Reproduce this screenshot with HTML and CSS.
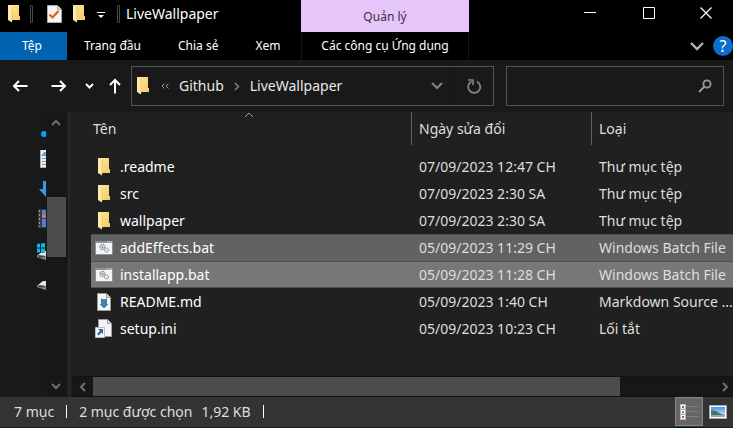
FILE: index.html
```html
<!DOCTYPE html>
<html lang="vi">
<head>
<meta charset="utf-8">
<title>LiveWallpaper</title>
<link rel="stylesheet" href="styles.css">
</head>
<body>
<svg class="defs" aria-hidden="true">
  <defs>
    <linearGradient id="fold" x1="0" y1="0" x2="1" y2="1"><stop offset="0" stop-color="#ffe79c"/><stop offset="1" stop-color="#f3cc63"/></linearGradient>
    <linearGradient id="sky" x1="0" y1="0" x2="0" y2="1"><stop offset="0" stop-color="#4a90f5"/><stop offset="1" stop-color="#e4f2fc"/></linearGradient>
    <symbol id="folder" viewBox="0 0 12 18">
      <path d="M0 0h11v11h1v4H4z" fill="url(#fold)"/>
      <path d="M0 0l4 2v15.500L0 15z" fill="#ffe9a8"/>
      <path d="M4 2v14" stroke="#e5bd5b" stroke-width=".6"/>
    </symbol>
    <symbol id="batch" viewBox="0 0 18 14">
      <path d="M.5.500h17v13H.5z" fill="#f5f5f5" stroke="#8c9196"/>
      <path d="M0 0h18v2H0z" fill="#8c9196"/><path d="M12 1h1m1 0h1m1 0h1" stroke="#eee"/>
      <circle cx="7.500" cy="6" r="2.500" fill="none" stroke="#8b8f94" stroke-width="1.500" stroke-dasharray="1.200 .5"/>
      <circle cx="7.500" cy="6" r="1" fill="#777"/>
      <circle cx="11.500" cy="9" r="2" fill="#e3edf4" stroke="#8ba5b8" stroke-width="1.300" stroke-dasharray="1 .5"/>
    </symbol>
    <symbol id="markdown" viewBox="0 0 14 18">
      <path d="M.5.500h9l4 4v13H.5z" fill="#f7f7f7" stroke="#9a9a9a"/><path d="M9.500.500v4h4" fill="#ddd" stroke="#9a9a9a"/>
      <path d="M4 5l1 1h4l1-1v6h1.500L7 15.500 2.500 11H4z" fill="#3f87a6"/>
    </symbol>
    <symbol id="shortcut" viewBox="0 0 18 19">
      <path d="M3.500.500h9l4 4v13h-13z" fill="#f4f4f4" stroke="#a0a0a0"/><path d="M12.500.500v4h4" fill="#ddd" stroke="#a0a0a0"/>
      <path d="M.5 8.500h9v10h-9z" fill="#f5f8fb" stroke="#b5bcc5"/>
      <path d="M3 10h5v5l-1.500-1.500-3 3-1.500-1.500 3-3z" fill="#2862a8"/>
    </symbol>
    <symbol id="drive" viewBox="0 0 9 9"><path d="M1 4l5-4h3v5z" fill="#e6e6e6"/><path d="M0 4l9 1v4L0 6z" fill="#969a9d"/><path d="M1 4.500l7 1v2L1 5.500z" fill="#303234"/><path d="M5 6l3 .5v1L5 7z" fill="#36b758"/></symbol>
  </defs>
</svg>
<div class="window">
  <header class="top">
    <div class="title">
      <svg class="folder"><use href="#folder"/></svg>
      <i class="bar"></i>
      <button class="qat check" aria-label="Thuộc tính"><svg width="15" height="18" viewBox="0 0 15 18"><path d="M.5.500h10l4 4v13H.5z" fill="#f5f5f8" stroke="#aaa"/><path d="M10.500.500v4h4" fill="#ddd" stroke="#aaa"/><path d="M2.500 9.500l3 3 6-6.500" fill="none" stroke="#f05a18" stroke-width="2.200"/></svg></button>
      <button class="qat" aria-label="Thư mục mới"><svg class="folder"><use href="#folder"/></svg></button>
      <button class="qat more" aria-label="Tùy chỉnh"><svg width="8" height="7" viewBox="0 0 8 7"><path d="M0 .5h8" stroke="#fff"/><path d="M1 3h6L4 6z" fill="#fff"/></svg></button>
      <i class="bar"></i>
      <h1>LiveWallpaper</h1>
    </div>
    <div class="context">Quản lý</div>
    <div class="caption">
      <button aria-label="Thu nhỏ"><svg width="12" height="12" viewBox="0 0 12 12"><path d="M0 5.500h12" stroke="#fff"/></svg></button>
      <button aria-label="Phóng to"><svg width="12" height="12" viewBox="0 0 12 12"><path d="M.5.500h11v11H.5z" fill="none" stroke="#fff"/></svg></button>
      <button aria-label="Đóng"><svg width="12" height="12" viewBox="0 0 12 12"><path d="M.5.500l11 11m0-11l-11 11" stroke="#fff" stroke-width="1.200"/></svg></button>
    </div>
    <nav class="tabs">
      <button class="file">Tệp</button><button>Trang đầu</button><button>Chia sẻ</button><button>Xem</button>
    </nav>
    <button class="tools">Các công cụ Ứng dụng</button>
    <div class="help">
      <button aria-label="Mở rộng dải băng"><svg width="14" height="9" viewBox="0 0 14 9"><path d="M1 1l6 6 6-6" fill="none" stroke="#b4b4b4" stroke-width="2.400"/></svg></button>
      <button class="question" aria-label="Trợ giúp">?</button>
    </div>
  </header>
  <div class="navbar">
    <div class="arrows">
      <button aria-label="Quay lại"><svg width="16" height="12" viewBox="0 0 16 12"><path d="M15.500 6H2m5-5L2 6l5 5" fill="none" stroke="#fff" stroke-width="2"/></svg></button>
      <button aria-label="Tiếp"><svg width="16" height="12" viewBox="0 0 16 12"><path d="M.5 6H14M9 1l5 5-5 5" fill="none" stroke="#fff" stroke-width="2"/></svg></button>
      <button aria-label="Vị trí gần đây"><svg width="9" height="6" viewBox="0 0 9 6"><path d="M1 1l3.500 3.500L8 1" fill="none" stroke="#fff" stroke-width="2"/></svg></button>
      <button aria-label="Lên"><svg width="12" height="16" viewBox="0 0 12 16"><path d="M6 15.500V2M1 7l5-5 5 5" fill="none" stroke="#fff" stroke-width="2"/></svg></button>
    </div>
    <div class="address">
      <svg class="folder"><use href="#folder"/></svg>
      <svg class="back" width="8" height="6" viewBox="0 0 8 6"><path d="M3.500.500L1 3l2.500 2.500m4-5L5 3l2.500 2.500" fill="none" stroke="#999"/></svg>
      <a href="#github">Github</a>
      <svg class="sep" width="6" height="9" viewBox="0 0 6 9"><path d="M1 1l3.500 3.500L1 8" fill="none" stroke="#808080" stroke-width="1.500"/></svg>
      <a href="#live">LiveWallpaper</a>
      <button class="drop" aria-label="Vị trí trước đó"><svg width="12" height="8" viewBox="0 0 12 8"><path d="M1 1l5 5 5-5" fill="none" stroke="#858585" stroke-width="2"/></svg></button>
      <button class="refresh" aria-label="Làm mới"><svg width="15" height="15" viewBox="0 0 15 15"><path d="M10 2.500A6 6 0 1 1 4.500 2.500" fill="none" stroke="#858585" stroke-width="1.800"/><path d="M1 1h5v5" fill="none" stroke="#858585" stroke-width="1.600"/></svg></button>
    </div>
    <label class="search"><input type="text" aria-label="Tìm kiếm"><svg width="14" height="14" viewBox="0 0 14 14"><circle cx="9" cy="5" r="3.600" fill="none" stroke="#999" stroke-width="1.800"/><path d="M6.500 7.500L1 13" stroke="#999" stroke-width="2"/></svg></label>
  </div>
  <div class="content">
    <aside class="side">
      <svg class="tree" width="10" height="176" viewBox="0 0 10 176" aria-hidden="true">
        <circle cx="8" cy="8" r="3" fill="#00a2ff"/>
        <path d="M4 24h6v18H4z" fill="#eee"/><path d="M4 24h1v18H4zM4 41h6v1H4z" fill="#aaa"/><path d="M6 30l3-4v4m-3-1h4" fill="none" stroke="#2583cc"/><path d="M6 32.500h4m-4 3h4m-4 3h4" stroke="#8095a5"/>
        <path d="M7 55h3v16L3 63h4z" fill="#319aea"/>
        <path d="M2 83h8v19H2z" fill="#3b3b3b"/><path d="M3.500 84v17" stroke="#999" stroke-dasharray="2 2"/><path d="M6 84h4v8H6zM6 93h4v8H6z" fill="#4c7fd8"/><path d="M6 89l2-2 2 3v2H6z" fill="#d46c7d"/>
        <use href="#drive" x="1" y="125" width="9" height="9"/><use href="#drive" x="1" y="155" width="9" height="9"/>
        <path d="M1 118l3-.500v4H1zM5 117.500l4-.500v4.500H5zM1 122.500h3v4H1zM5 122.500h4v4.500H5z" fill="#00bcf2"/>
      </svg>
      <div class="vscroll">
        <button aria-label="Cuộn lên"><svg width="10" height="8" viewBox="0 0 10 8"><path d="M1 6l4-4 4 4" fill="none" stroke="#707070" stroke-width="2"/></svg></button>
        <i></i>
        <button aria-label="Cuộn xuống"><svg width="10" height="8" viewBox="0 0 10 8"><path d="M1 2l4 4 4-4" fill="none" stroke="#707070" stroke-width="2"/></svg></button>
      </div>
    </aside>
    <main class="files">
      <table>
        <colgroup><col class="name"><col class="date"><col></colgroup>
        <thead><tr><th>Tên<svg class="sort" width="10" height="6" viewBox="0 0 10 6"><path d="M1 5l4-4 4 4" fill="none" stroke="#999"/></svg></th><th>Ngày sửa đổi</th><th>Loại</th></tr></thead>
        <tbody>
          <tr><td><div class="item"><svg class="folder"><use href="#folder"/></svg><span>.readme</span></div></td><td>07/09/2023 12:47 CH</td><td>Thư mục tệp</td></tr>
          <tr><td><div class="item"><svg class="folder"><use href="#folder"/></svg><span>src</span></div></td><td>07/09/2023 2:30 SA</td><td>Thư mục tệp</td></tr>
          <tr><td><div class="item"><svg class="folder"><use href="#folder"/></svg><span>wallpaper</span></div></td><td>07/09/2023 2:30 SA</td><td>Thư mục tệp</td></tr>
          <tr class="selected"><td><div class="item"><svg width="18" height="14"><use href="#batch"/></svg><span>addEffects.bat</span></div></td><td>05/09/2023 11:29 CH</td><td>Windows Batch File</td></tr>
          <tr class="selected focus"><td><div class="item"><svg width="18" height="14"><use href="#batch"/></svg><span>installapp.bat</span></div></td><td>05/09/2023 11:28 CH</td><td>Windows Batch File</td></tr>
          <tr><td><div class="item"><svg width="14" height="18"><use href="#markdown"/></svg><span>README.md</span></div></td><td>05/09/2023 1:40 CH</td><td>Markdown Source ...</td></tr>
          <tr><td><div class="item"><svg width="18" height="19"><use href="#shortcut"/></svg><span>setup.ini</span></div></td><td>05/09/2023 10:23 CH</td><td>Lối tắt</td></tr>
        </tbody>
      </table>
      <div class="hscroll">
        <button aria-label="Cuộn trái"><svg width="8" height="10" viewBox="0 0 8 10"><path d="M6 1L2 5l4 4" fill="none" stroke="#707070" stroke-width="2"/></svg></button>
        <div class="track"><i></i></div>
        <button aria-label="Cuộn phải"><svg width="8" height="10" viewBox="0 0 8 10"><path d="M2 1l4 4-4 4" fill="none" stroke="#707070" stroke-width="2"/></svg></button>
      </div>
    </main>
  </div>
  <footer class="status">
    <span>7 mục</span><i></i><span>2 mục được chọn</span><span class="size">1,92 KB</span><i></i>
    <div class="views">
      <button class="on" aria-label="Chi tiết"><svg width="18" height="16" viewBox="0 0 18 16"><path d="M0 0h6v16H0z" fill="#ddd"/><path d="M.5.500h5v4.500h-5zM.5 5.500h5v4.500h-5zM.5 10.500h5v5h-5z" fill="#fff" stroke="#b5b5b5"/><path d="M2 2h2v2H2z" fill="#347ec0"/><path d="M2 7h2v2H2z" fill="#88943b"/><path d="M2 12h2v2H2z" fill="#ce4b22"/><path d="M7 2.500h5m1 0h5m-11 5h5m1 0h5m-11 5h5m1 0h5" stroke="#858585"/></svg></button>
      <button aria-label="Hình thu nhỏ lớn"><svg width="18" height="14" viewBox="0 0 18 14"><path d="M.5.500h17v13H.5z" fill="#fff" stroke="#aaa"/><path d="M2 2h14v10H2z" fill="url(#sky)"/><path d="M2 5l5 1 5 3 4 1v1H2z" fill="#47775c"/><path d="M2 10h14v2H2z" fill="#81aebb"/></svg></button>
    </div>
  </footer>
</div>
</body>
</html>
```
FILE: styles.css
```css
* { box-sizing: border-box; }
body { margin: 0; background: #191919; color: #fff; font: 14px/20px "Noto Sans", "Open Sans", sans-serif; }
button { padding: 0; border: 0; background: none; color: inherit; font: inherit; display: flex; align-items: center; justify-content: center; }
svg { display: block; flex: none; }
a { color: #e8e8e8; text-decoration: none; }
.defs { position: absolute; width: 0; height: 0; }
.folder { width: 12px; height: 18px; }
.window { min-height: 100vh; display: flex; flex-direction: column; }

.top { display: grid; grid-template-columns: 301px 168px 1fr; grid-template-rows: 32px 28px; background: #000; }
.title { display: flex; align-items: center; padding: 0 0 4px 8px; }
.title h1 { margin: 0 0 0 6px; font-size: 14px; font-weight: 400; line-height: 20px; }
.bar { width: 3px; height: 18px; border: 1px solid #484848; border-radius: 1px; }
.title .folder + .bar { margin-left: 10px; }
.check { margin: 0 11px 0 14px; }
.more { margin: 2px 12px 0; }
.context { background: #e6c6f8; color: #3a3040; font-size: 12px; line-height: 34px; text-align: center; }
.caption { display: flex; justify-content: flex-end; padding-bottom: 6px; }
.caption button { width: 59px; }
.caption button:last-child { width: 55px; }
.tabs, .tools { font-size: 12px; }
.tabs { display: flex; }
.tabs .file { width: 67px; padding-right: 3px; background: #0063b1; }
.tabs button + button { padding: 0 20px 0 17px; }
.tools { border: solid #161616; border-width: 0 1px; }
.help { display: flex; justify-content: flex-end; align-items: center; gap: 9px; }
.question { width: 20px; height: 20px; border-radius: 50%; background: #0b6fd0; font-size: 16px; }

.navbar { display: grid; grid-template-columns: 107px 5fr 3fr; column-gap: 12px; height: 52px; padding: 6px 9px 7px 12px; background: #191919; }
.arrows { display: flex; align-items: center; gap: 18px; }
.arrows button { height: 40px; }
.arrows button:nth-child(2) { margin-left: 5px; }
.arrows button:nth-child(3) { margin-right: -3px; }
.address, .search { display: flex; align-items: center; min-width: 0; border: 1px solid #535353; }
.address { padding-left: 5px; }
.back { margin: 0 10px 0 12px; }
.sep { margin: 0 10px; }
.drop { width: 36px; height: 37px; margin-left: auto; }
.refresh { width: 38px; height: 37px; border-left: 1px solid #151515; }
.search { padding-right: 11px; }
.search input { flex: 1; min-width: 0; height: 100%; border: 0; background: none; color: #fff; font: inherit; }

.content { flex: 1; display: flex; }
.side { display: flex; justify-content: flex-end; width: 70px; padding-right: 2px; border-right: 2px solid #292929; }
.tree { margin-top: 14px; }
.vscroll { display: flex; flex-direction: column; align-items: center; width: 20px; background: #171717; }
.vscroll button { width: 20px; height: 22px; }
.vscroll i { width: 19px; height: 60px; margin: 63px 0 auto; background: #4d4d4d; }
.files { flex: 1; min-width: 0; display: flex; flex-direction: column; padding-left: 2px; background: #202020; }
table { width: calc(100% - 19px); margin-left: 19px; border-spacing: 0; table-layout: fixed; }
.name { width: 321px; }
.date { width: 180px; }
th { position: relative; height: 33px; padding: 0 0 0 7px; border-right: 1px solid #606060; color: #dedede; font-weight: 400; text-align: left; }
th:first-child { padding-left: 2px; }
th:last-child { border-right: 0; }
.sort { position: absolute; left: 153px; top: 0; }
tbody::before { content: ""; display: block; height: 8px; }
td { height: 27px; padding: 0 0 0 7px; color: #dedede; white-space: nowrap; }
td:first-child { padding-left: 3px; color: #fff; }
.item { display: grid; grid-template-columns: 20px 1fr; align-items: center; gap: 6px; }
.item svg { justify-self: center; }
.selected td { background: #626262; border: solid #515151; border-width: 1px 0 0; }
.focus td { background: #777; border-bottom-width: 1px; }
.hscroll { display: flex; height: 21px; margin-top: auto; background: #171717; border: solid #121212; border-width: 1px 0; }
.hscroll button { width: 21px; }
.hscroll button:last-child { width: 17px; }
.track { flex: 1; }
.track i { display: block; width: 84.6%; height: 19px; background: #4d4d4d; }

.status { display: flex; align-items: center; height: 31px; padding: 0 0 1px 14px; background: #333; border-bottom: 1px solid #191919; color: #dedede; }
.status i { width: 1px; height: 13px; margin: 0 12px; background: #fff; }
.size { margin-left: 9px; }
.views { display: flex; margin-left: auto; align-self: stretch; }
.views button { width: 30px; }
.views .on { width: 28px; background: #666; border: 1px solid #858585; }
```
